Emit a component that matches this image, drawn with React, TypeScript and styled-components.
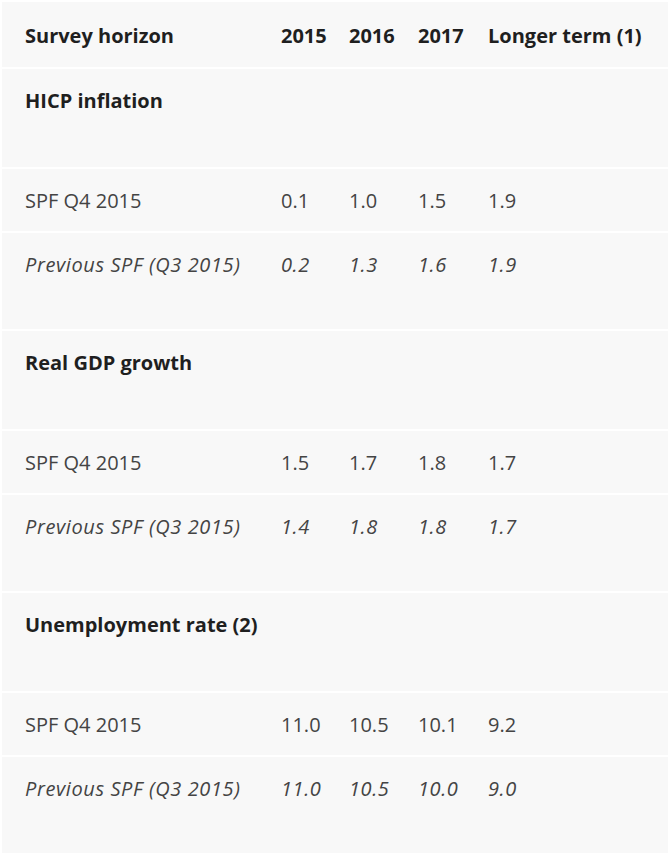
import React from "react";
import styled, { createGlobalStyle } from "styled-components";

const Global = createGlobalStyle`
  html, body { margin: 0; padding: 0; background: #ffffff; }
  body { font-family: "Open Sans", "Noto Sans", "DejaVu Sans", sans-serif; }
`;

const Table = styled.div`
  display: flex;
  flex-direction: column;
  gap: 2px;
  padding: 2px 2px 3px 2px;
  background: #ffffff;
  width: 666px;
`;

type Kind = "head" | "section" | "data" | "prev";

const heights: Record<Kind, number> = { head: 65, section: 98, data: 62, prev: 96 };

const Row = styled.div<{ $kind: Kind }>`
  display: grid;
  grid-template-columns: 256px 68px 69px 70px 1fr;
  align-items: start;
  box-sizing: border-box;
  height: ${(p) => heights[p.$kind]}px;
  padding: ${(p) => (p.$kind === "head" ? 20 : 18)}px 0 0 23px;
  background: #f8f8f8;
  font-size: 20px;
  line-height: 28px;
  letter-spacing: ${(p) => (p.$kind === "prev" ? "0.6px" : "0")};
  color: ${(p) => (p.$kind === "head" || p.$kind === "section" ? "#1f1f1f" : "#444444")};
  font-weight: ${(p) => (p.$kind === "head" || p.$kind === "section" ? 700 : 400)};
  font-style: ${(p) => (p.$kind === "prev" ? "italic" : "normal")};
`;

const Cell = styled.div`
  white-space: nowrap;
`;

type Group = { title: string; cur: string[]; prev: string[] };

const groups: Group[] = [
  { title: "HICP inflation", cur: ["0.1", "1.0", "1.5", "1.9"], prev: ["0.2", "1.3", "1.6", "1.9"] },
  { title: "Real GDP growth", cur: ["1.5", "1.7", "1.8", "1.7"], prev: ["1.4", "1.8", "1.8", "1.7"] },
  { title: "Unemployment rate (2)", cur: ["11.0", "10.5", "10.1", "9.2"], prev: ["11.0", "10.5", "10.0", "9.0"] },
];

export default function App() {
  return (
    <>
      <Global />
      <Table>
        <Row $kind="head">
          <Cell>Survey horizon</Cell>
          <Cell>2015</Cell>
          <Cell>2016</Cell>
          <Cell>2017</Cell>
          <Cell>Longer term (1)</Cell>
        </Row>
        {groups.map((g) => (
          <React.Fragment key={g.title}>
            <Row $kind="section">
              <Cell>{g.title}</Cell>
            </Row>
            <Row $kind="data">
              <Cell>SPF Q4 2015</Cell>
              {g.cur.map((v, i) => (
                <Cell key={i}>{v}</Cell>
              ))}
            </Row>
            <Row $kind="prev">
              <Cell>Previous SPF (Q3 2015)</Cell>
              {g.prev.map((v, i) => (
                <Cell key={i}>{v}</Cell>
              ))}
            </Row>
          </React.Fragment>
        ))}
      </Table>
    </>
  );
}
